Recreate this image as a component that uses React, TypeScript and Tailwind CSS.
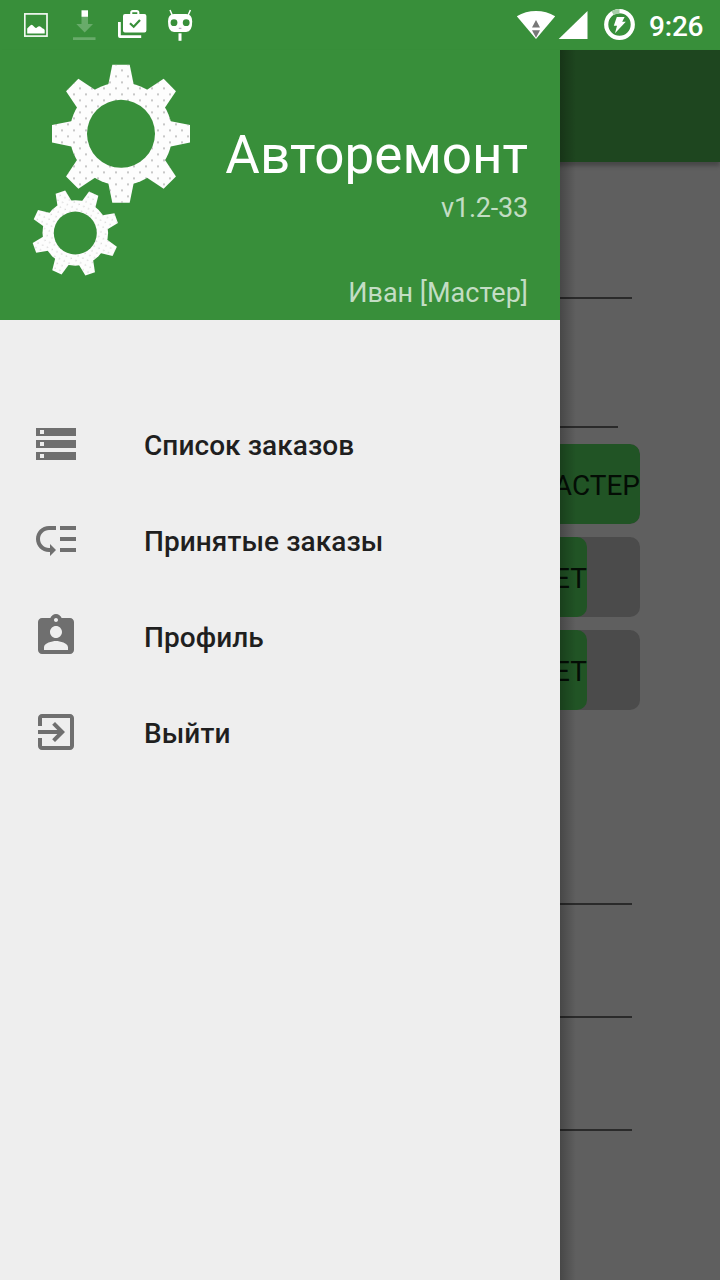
import React from "react";

const GREEN = "#388f3a";

const MENU = [
  {
    label: "Список заказов",
    d: "M2 20h20v-4H2v4zm2-3h2v2H4v-2zM2 4v4h20V4H2zm4 3H4V5h2v2zm-4 7h20v-4H2v4zm2-3h2v2H4v-2z",
  },
  {
    label: "Принятые заказы",
    d: "M14 5h8v2h-8zm0 5.5h8v2h-8zm0 5.5h8v2h-8zM2 11.5C2 15.08 4.92 18 8.5 18H9v2l3-3-3-3v2h-.5C6.02 16 4 13.98 4 11.5S6.02 7 8.5 7H12V5H8.5C4.92 5 2 7.92 2 11.5z",
  },
  {
    label: "Профиль",
    d: "M19 3h-4.18C14.4 1.84 13.3 1 12 1c-1.3 0-2.4.84-2.82 2H5c-1.1 0-2 .9-2 2v14c0 1.1.9 2 2 2h14c1.1 0 2-.9 2-2V5c0-1.1-.9-2-2-2zm-7 0c.55 0 1 .45 1 1s-.45 1-1 1-1-.45-1-1 .45-1 1-1zm0 4c1.66 0 3 1.34 3 3s-1.34 3-3 3-3-1.34-3-3 1.34-3 3-3zm6 12H6v-1.4c0-2 4-3.1 6-3.1s6 1.1 6 3.1V19z",
  },
  {
    label: "Выйти",
    d: "M10.09 15.59L11.5 17l5-5-5-5-1.41 1.41L12.67 11H3v2h9.67l-2.58 2.59zM19 3H5c-1.11 0-2 .9-2 2v4h2V5h14v14H5v-4H3v4c0 1.1.89 2 2 2h14c1.1 0 2-.9 2-2V5c0-1.1-.9-2-2-2z",
  },
];

const ANGLES = [0, 45, 90, 135, 180, 225, 270, 315];

function Gear(p: {
  cx: number; cy: number; body: number; hole: number; tip: number;
  tipHalf: number; baseHalf: number; rotate: number; fill: string;
}) {
  const base = p.body - 4;
  const half = p.baseHalf + 0.8;
  const tooth = `-${half},-${base} -${p.tipHalf},-${p.tip} ${p.tipHalf},-${p.tip} ${half},-${base}`;
  const parts = (fill: string) => (
    <g transform={`translate(${p.cx} ${p.cy})`} fill={fill}>
      <circle r={p.body} />
      {ANGLES.map((a) => (
        <polygon key={a} points={tooth} transform={`rotate(${a + p.rotate})`} />
      ))}
    </g>
  );
  const id = `${p.fill}-clip`;
  return (
    <g>
      <mask id={id}>{parts("#fff")}</mask>
      {parts("#fdfdfd")}
      <rect width="190" height="240" fill={`url(#${p.fill})`} mask={`url(#${id})`} />
      <circle cx={p.cx} cy={p.cy} r={p.hole} fill={GREEN} />
    </g>
  );
}

function Gears() {
  return (
    <svg className="ml-5 h-[240px] w-[190px] shrink-0" viewBox="0 0 190 240">
      <defs>
        <pattern id="dots-big" width="12" height="12" x="96" y="14.4" patternUnits="userSpaceOnUse">
          <ellipse cx="6" cy="6" rx="1" ry="0.7" fill="#999" />
          <ellipse cx="0" cy="0" rx="1" ry="0.7" fill="#999" />
          <ellipse cx="12" cy="0" rx="1" ry="0.7" fill="#999" />
          <ellipse cx="0" cy="12" rx="1" ry="0.7" fill="#999" />
          <ellipse cx="12" cy="12" rx="1" ry="0.7" fill="#999" />
        </pattern>
        <pattern id="dots-small" width="7.4" height="7.4" patternUnits="userSpaceOnUse" patternTransform="rotate(-20 55 183)">
          <circle cx="2" cy="2" r="0.55" fill="#bbb" />
          <circle cx="5.7" cy="5.7" r="0.55" fill="#bbb" />
        </pattern>
      </defs>
      <Gear cx={101} cy={83.8} body={51.3} hole={34} tip={69} tipHalf={8.7} baseHalf={12.3} rotate={0} fill="dots-big" />
      <Gear cx={55.3} cy={183} body={32.8} hole={21.5} tip={43.5} tipHalf={5.1} baseHalf={7.2} rotate={25} fill="dots-small" />
    </svg>
  );
}

function StatusBar() {
  return (
    <header className="flex h-[50px] items-start justify-between bg-[#388f3a]">
      <div className="flex pl-6">
        <svg className="h-[50px] w-12" viewBox="24 0 48 50">
          <rect x="24.8" y="13.9" width="22.2" height="22.2" fill="none" stroke="#f2f8f2" strokeWidth="1.7" />
          <path d="M27.2 33.5v-5c1.5-1 2.5-3.3 4.3-3.8 1.7.2 2.7 2.7 4.3 3.3 1.4-.1 2-1.8 3.6-1.7 2 .3 2.3 2 4.1 2.5q1.2.5 1.2 1.5v3.2z" fill="#fff" />
        </svg>
        <svg className="h-[50px] w-11" viewBox="72 0 44 50">
          <rect x="81.5" y="10.3" width="6.5" height="6.5" fill="#fff" />
          <path d="M81.5 17h6.5v7h5l-8.3 8.5-8.4-8.5h5.2zM73 37.3h22.5v2.8H73z" fill="#68ab6a" />
        </svg>
        <svg className="h-[50px] w-[50px]" viewBox="116 0 50 50">
          <path d="M118 22h2.8v13.2h20.4V38H120q-2 0-2-2z" fill="#fff" />
          <path d="M125 14h5.2v-1.3q0-2.7 2.7-2.7h3.8q2.7 0 2.7 2.7V14h5q2 0 2 2v14.6q0 2-2 2H125q-2 0-2-2V16q0-2 2-2zm7.3 0h5v-1.7h-5z" fill="#fff" fillRule="evenodd" />
          <path d="m130 23.3 3.7 3.5 6.3-6.8" fill="none" stroke={GREEN} strokeWidth="2.2" />
        </svg>
        <svg className="h-[50px] w-8" viewBox="166 0 32 50">
          <path d="m170 10 2.2 5M190.4 10l-2.2 5" stroke="#fff" strokeWidth="1.5" />
          <path d="M174 14h12.2q6 0 6 7.5 0 10.5-6 10.5H174q-6 0-6-10.5 0-7.5 6-7.5z" fill="#fff" />
          <circle cx="174" cy="22.7" r="3.4" fill={GREEN} />
          <circle cx="186.2" cy="22.7" r="3.4" fill={GREEN} />
          <path d="M178.8 28.3h2.6" stroke="#a98fb5" />
          <rect x="178.5" y="33.3" width="3" height="7.5" fill="#fff" />
        </svg>
      </div>
      <div className="flex">
        <svg className="h-[50px] w-[74px]" viewBox="516 0 74 50">
          <path d="M536 39 516.8 16.2Q525.5 11 536 11t19.2 5.2z" fill="#fff" />
          <path d="m536 20 4 7.5h-8zM532 30.3h8l-4 7.5z" fill="#777" />
          <path d="M587.5 11v28h-28.8z" fill="#fff" />
        </svg>
        <svg className="h-[50px] w-[50px]" viewBox="590 0 50 50">
          <circle cx="619.5" cy="24.5" r="13.3" fill="none" stroke="#fff" strokeWidth="4.2" />
          <path d="M612.6 13.1A13.3 13.3 0 0 1 619.5 11.2" fill="none" stroke="#a9cfaa" strokeWidth="4.4" />
          <path d="M616.8 17h7.8l-2.4 4.8h3.6L615 33.3l2-7.5h-3.2z" fill="#fff" />
        </svg>
        <div className="w-20 pl-[9px] pt-[10px] text-[28px] leading-[33px] font-medium tracking-[-0.2px] text-white">9:26</div>
      </div>
    </header>
  );
}

function Toggle({ label, wide }: { label: string; wide?: boolean }) {
  return (
    <div className="flex h-20 w-[400px] overflow-hidden rounded-[10px] bg-[#4b4b4b]">
      <div className={`flex h-20 items-center justify-end rounded-[10px] bg-[#215425] pt-[3px] text-[28px] text-[#040d05] ${wide ? "w-[400px]" : "w-[347px]"}`}>
        {label}
      </div>
    </div>
  );
}

export default function App() {
  return (
    <div className="relative flex h-[1280px] w-[720px] flex-col overflow-hidden bg-[#5f5f5f] font-[Roboto,sans-serif]">
      <StatusBar />
      <div className="h-28 shrink-0 bg-[#1e461f] shadow-[0_4px_4px_rgba(0,0,0,0.25)]" />
      <main className="flex flex-col pl-60">
        <div className="mt-[135px] h-0.5 w-[392px] bg-[#2a2a2a]" />
        <div className="mt-[127px] h-0.5 w-[378px] bg-[#2a2a2a]" />
        <div className="mt-4 flex flex-col gap-[13px]">
          <Toggle label="МАСТЕР" wide />
          <Toggle label="НЕТ" />
          <Toggle label="НЕТ" />
        </div>
        <div className="mt-[193px] h-0.5 w-[392px] bg-[#2a2a2a]" />
        <div className="mt-[111px] h-0.5 w-[392px] bg-[#2a2a2a]" />
        <div className="mt-[111px] h-0.5 w-[392px] bg-[#2a2a2a]" />
      </main>

      <div className="absolute top-[50px] bottom-0 left-[560px] w-4 bg-linear-to-r from-black/25 to-transparent" />
      <aside className="absolute top-[50px] bottom-0 left-0 w-[560px] bg-[#eeeeee]">
        <div className="flex h-[270px] bg-[#388f3a]">
          <Gears />
          <div className="flex grow flex-col items-end pr-8 whitespace-nowrap">
            <h1 className="mt-[73px] text-[53px] leading-[64px] text-white">Авторемонт</h1>
            <p className="mt-[5px] text-[27px] leading-[33px] tracking-[-0.2px] text-[#c3ddc4]">v1.2-33</p>
            <p className="mt-[52px] text-[27px] leading-[33px] text-[#c3ddc4]">Иван [Мастер]</p>
          </div>
        </div>
        <nav className="mt-[76px]">
          {MENU.map((m) => (
            <a key={m.label} className="flex h-24 items-center pl-8">
              <svg className="size-12 fill-[#6f6f6f]" viewBox="0 0 24 24">
                <path d={m.d} />
              </svg>
              <span className="ml-16 pt-[3px] text-[28px] leading-[33px] font-medium tracking-[0.07px] text-[#1f1f1f]">{m.label}</span>
            </a>
          ))}
        </nav>
      </aside>
    </div>
  );
}
